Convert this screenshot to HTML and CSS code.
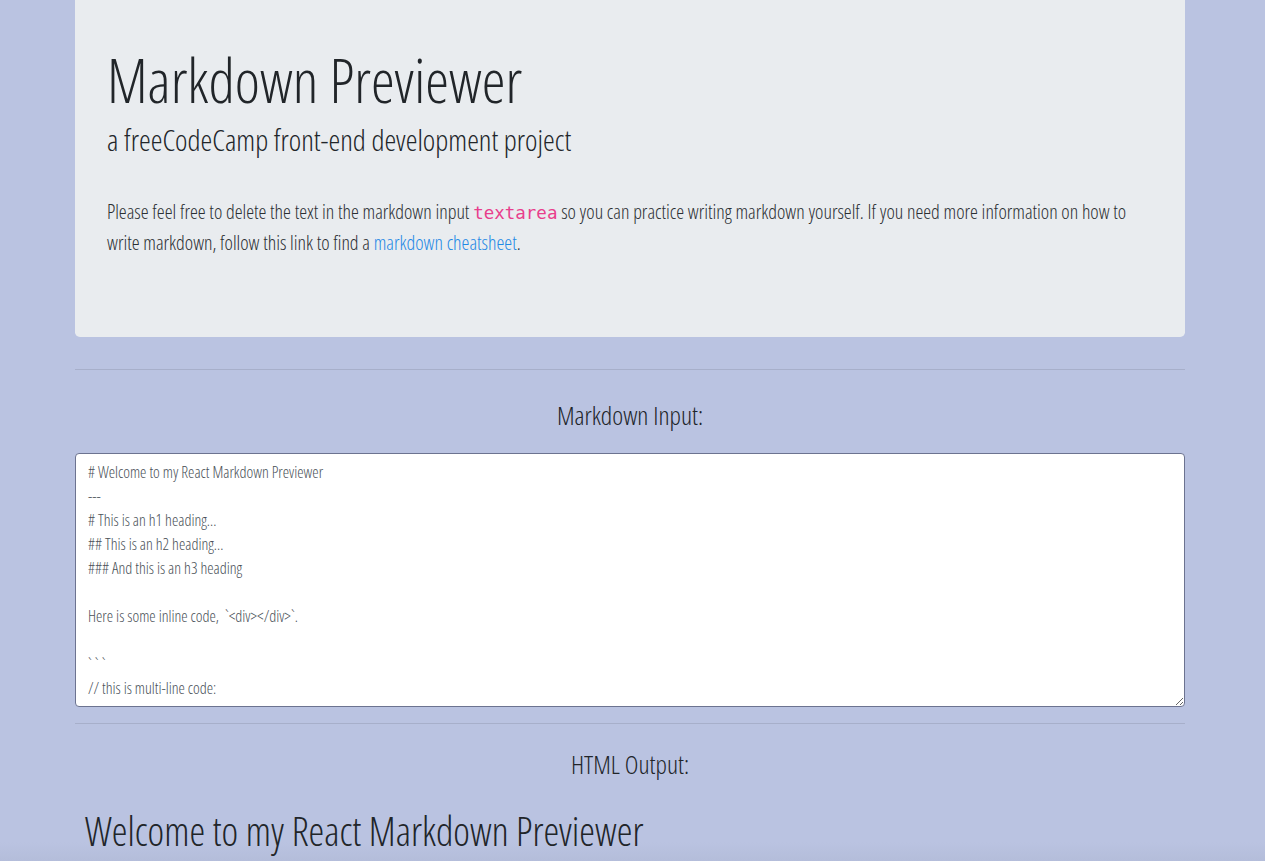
FILE: index.html
```html
<!DOCTYPE html>
<html lang="en">
<head>
<meta charset="utf-8">
<title>Markdown Previewer</title>
<link rel="stylesheet" href="styles.css">
</head>
<body>
<div class="container">
  <header class="jumbotron">
    <h1 class="title">Markdown Previewer</h1>
    <h3 class="subtitle">a freeCodeCamp front-end development project</h3>
    <p class="lead">Please feel free to delete the text in the markdown input <code>textarea</code> so you can practice writing markdown yourself. If you need more information on how to write markdown, follow this link to find a <a href="#">markdown cheatsheet</a>.</p>
  </header>
  <hr class="rule">
  <h3 class="section-title input-title">Markdown Input:</h3>
  <textarea class="editor" spellcheck="false"># Welcome to my React Markdown Previewer
---
# This is an h1 heading...
## This is an h2 heading...
### And this is an h3 heading

Here is some inline code,  &#96;&lt;div&gt;&lt;/div&gt;&#96;.

&#96; &#96; &#96;
// this is multi-line code:

function anotherExample(firstLine, lastLine) {
  if (firstLine == '&#96;&#96;&#96;' &amp;&amp; lastLine == '&#96;&#96;&#96;') {
    return multiLineCode;
  }
}
&#96;&#96;&#96;
</textarea>
  <hr class="rule rule-output">
  <h3 class="section-title output-title">HTML Output:</h3>
  <div class="preview">
    <h1 class="preview-h1">Welcome to my React Markdown Previewer</h1>
  </div>
</div>
</body>
</html>
```

FILE: styles.css
```css
html,
body {
  margin: 0;
  padding: 0;
}

body {
  background: linear-gradient(to bottom, #bac3e1 0, #bac3e1 842px, #b4bdda 861px);
  color: #212529;
  font-family: "Open Sans", "Liberation Sans", sans-serif;
  font-stretch: 75%;
  font-weight: 300;
  overflow: hidden;
  height: 861px;
}

.container {
  width: 1110px;
  margin-left: 75px;
}

.jumbotron {
  background: #e9ecef;
  padding: 44px 32px 79px;
  border-radius: 0 0 4.8px 4.8px;
  margin-bottom: 32px;
}

.title {
  font-size: 60px;
  font-weight: 300;
  line-height: 1.2;
  margin: 0;
}

.subtitle {
  font-size: 29.7px;
  font-weight: 300;
  line-height: 1.2;
  margin: 6px 0 0;
}

.lead {
  font-size: 19.9px;
  font-weight: 300;
  line-height: 30px;
  margin: 39px 0 0;
  color: #2b2f33;
}

.lead code {
  font-family: "DejaVu Sans Mono", "Liberation Mono", monospace;
  font-stretch: 100%;
  font-weight: 400;
  color: #e83e8c;
  font-size: 17.5px;
}

.lead a {
  color: #1e88e5;
  text-decoration: none;
}

.rule {
  border: 0;
  border-top: 1px solid rgba(0, 0, 0, 0.1);
  margin: 0;
}

.section-title {
  font-size: 26px;
  font-weight: 300;
  line-height: 1.2;
  text-align: center;
  margin: 0;
}

.input-title {
  margin: 30px 0 22px;
}

.editor {
  display: block;
  box-sizing: border-box;
  width: 1110px;
  height: 254px;
  margin: 0;
  padding: 6px 12px;
  border: 1px solid #6c7390;
  border-radius: 4px;
  background: #fff;
  color: #495057;
  font-family: "Open Sans", "Liberation Sans", sans-serif;
  font-stretch: 75%;
  font-weight: 300;
  font-size: 16px;
  line-height: 24px;
  resize: vertical;
  overflow: hidden;
  outline: none;
}

.rule-output {
  margin-top: 16px;
}

.output-title {
  margin: 25px 0 0;
}

.preview {
  padding: 28px 10px 0;
}

.preview-h1 {
  font-size: 39.7px;
  font-weight: 300;
  line-height: 1.2;
  margin: 0;
}
```
